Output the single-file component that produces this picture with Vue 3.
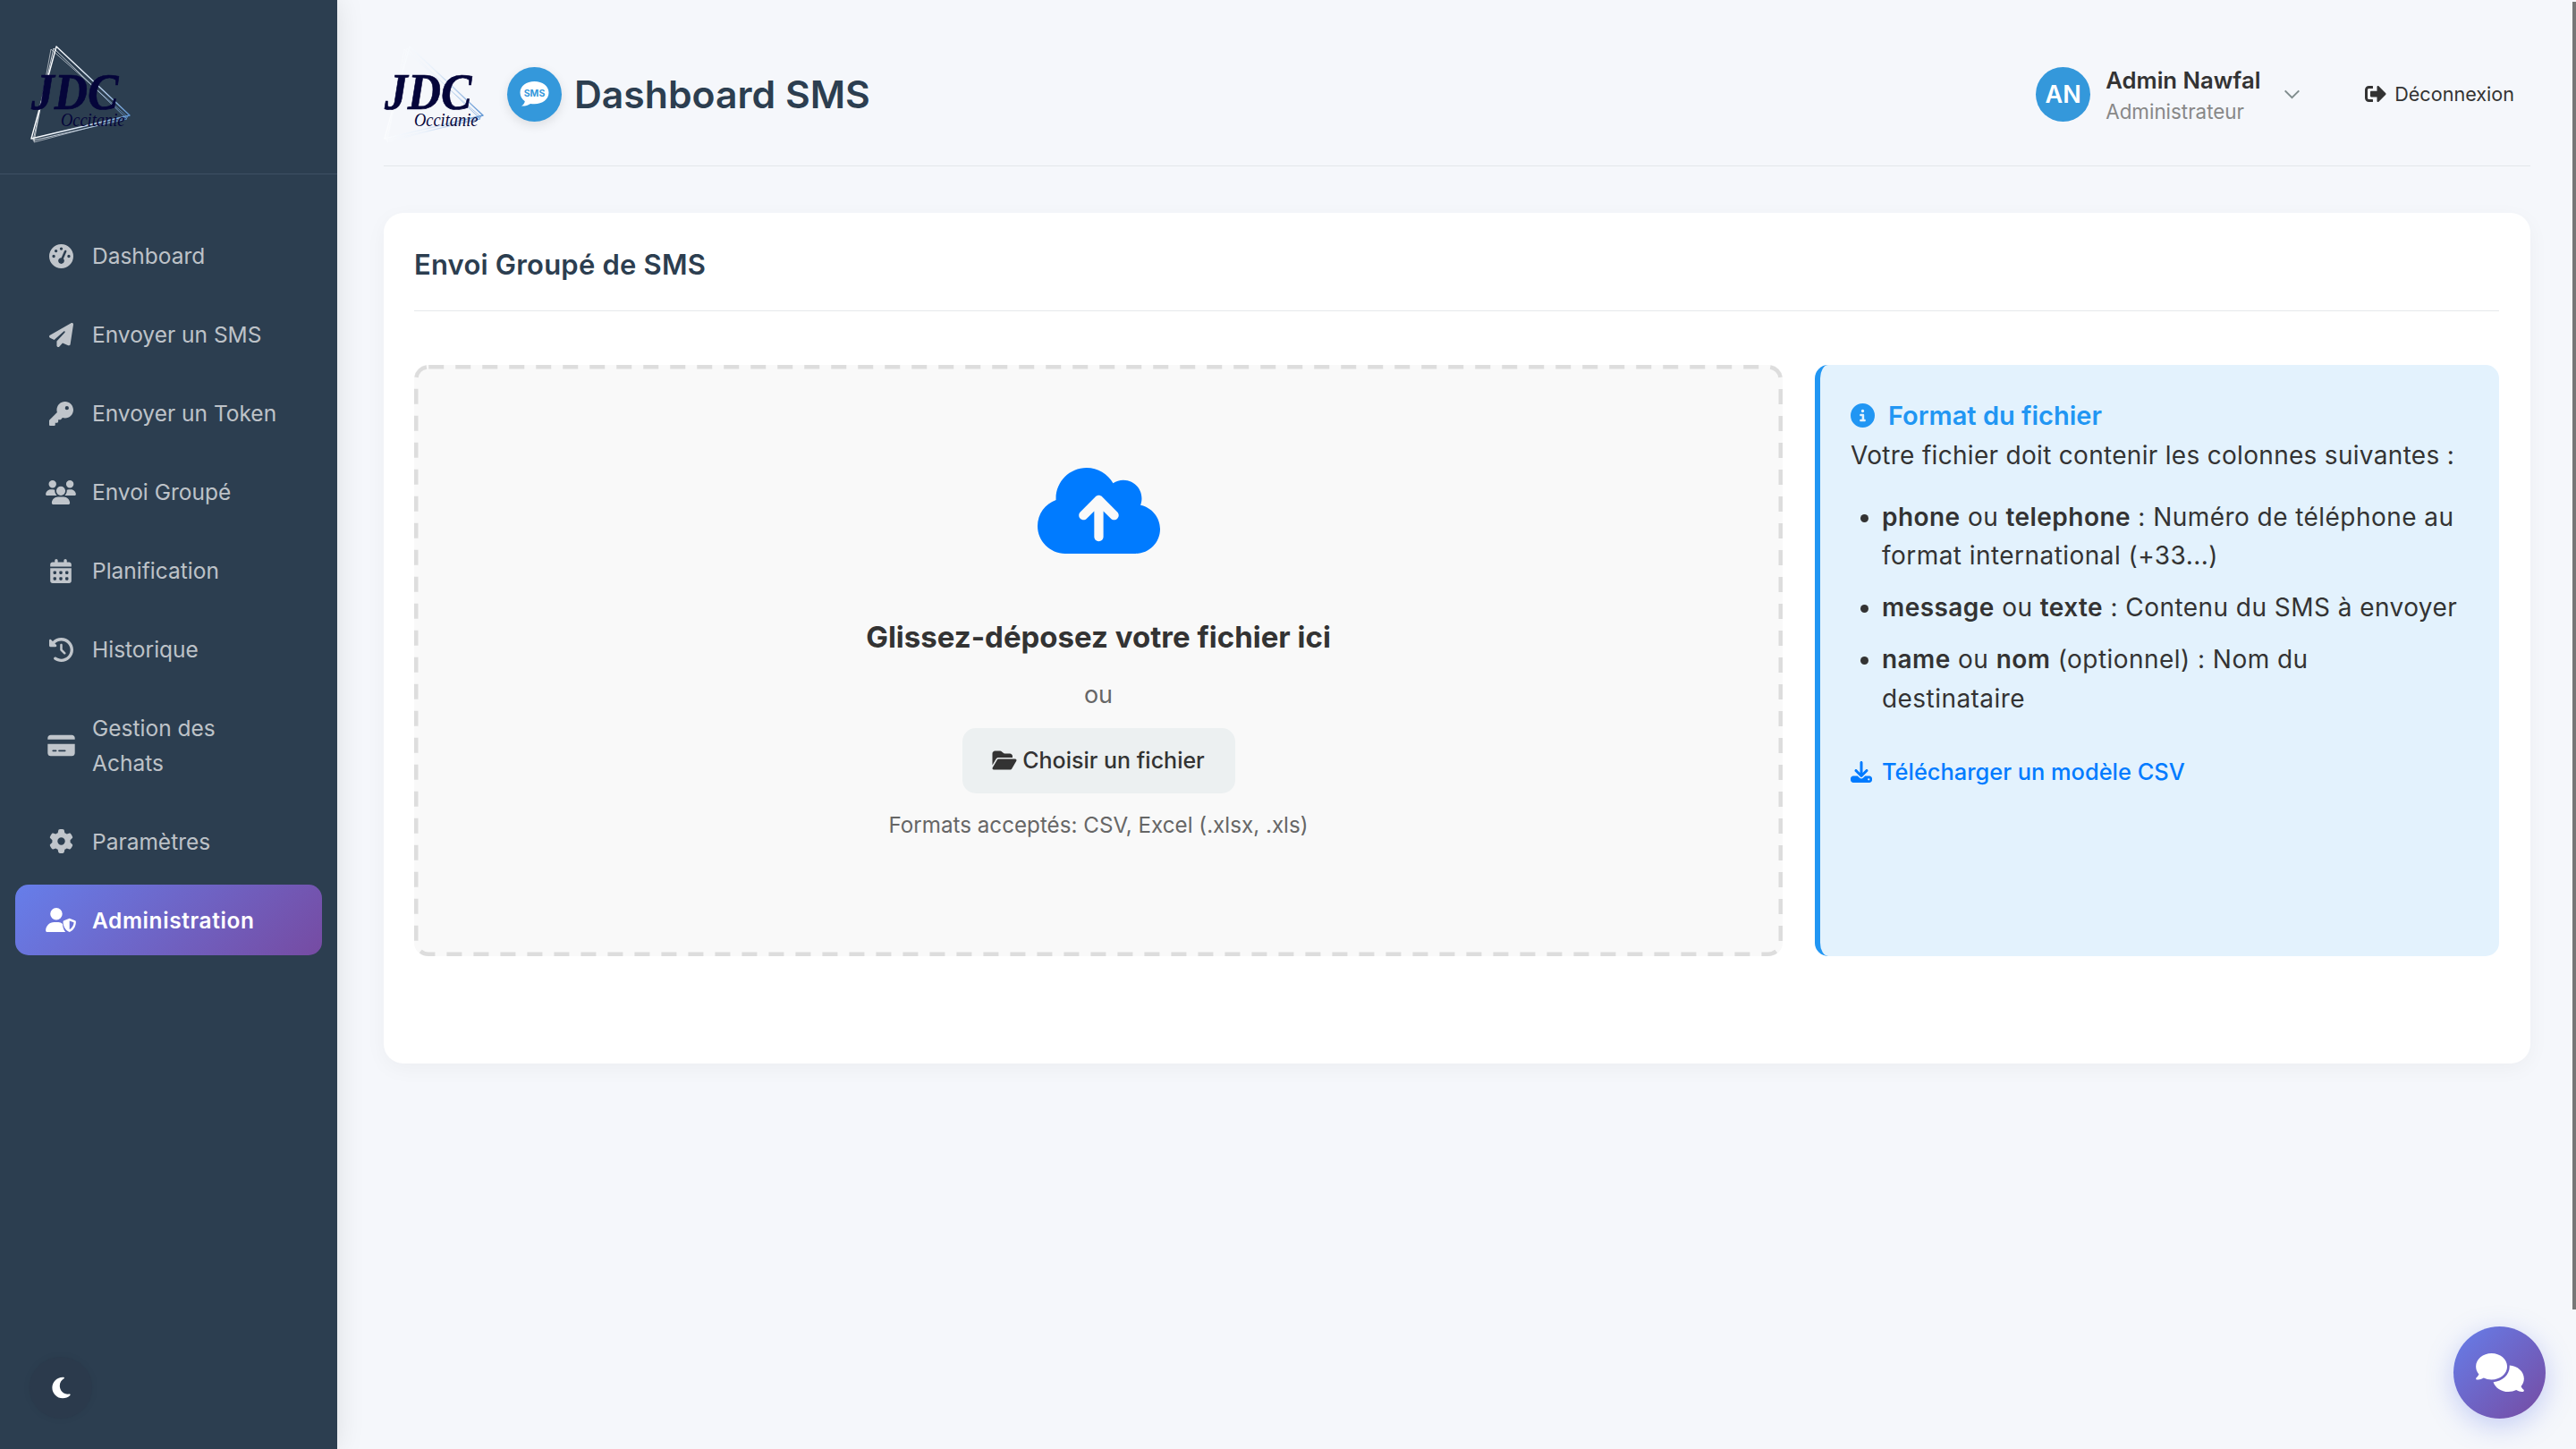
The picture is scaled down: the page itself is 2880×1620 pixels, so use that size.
<template>
  <div class="app">
    <aside class="sidebar">
      <div class="sidebar-logo">
        <svg class="logo" viewBox="0 0 120 120">
          <defs>
            <linearGradient id="jdc-tri" gradientUnits="userSpaceOnUse" x1="5" y1="60" x2="115" y2="80">
              <stop offset="0" stop-color="#ffffff" />
              <stop offset="0.45" stop-color="#e8f0fa" />
              <stop offset="0.75" stop-color="#a9c6e8" />
              <stop offset="1" stop-color="#5f95d3" />
            </linearGradient>
          </defs>
          <g fill="none" stroke="url(#jdc-tri)">
            <path d="M33 7 L115 84 L5 110 Z" stroke-width="1.4" stroke-linejoin="round" />
            <path d="M30 9 L112 88 L7 112 Z" stroke-width="0.8" />
            <path d="M27 10 L113 86 L8 114 Z" stroke-width="0.6" />
          </g>
          <text class="logo-jdc" transform="translate(5 77) scale(0.89 1)">JDC</text>
          <text class="logo-occ" transform="translate(38 96) scale(1.15 1.3)">Occitanie</text>
        </svg>
      </div>
      <nav class="nav">
        <a v-for="item in navItems" :key="item.label" class="nav-item" :class="{ active: item.active }">
          <span class="nav-icon">
            <svg :viewBox="item.box" :style="{ width: item.width + 'px' }"><path :d="item.d" /></svg>
          </span>
          <span class="nav-label">{{ item.label }}</span>
        </a>
      </nav>
      <button class="theme-toggle">
        <svg viewBox="0 0 384 512"><path d="M223.5 32C100 32 0 132.3 0 256S100 480 223.5 480c60.6 0 115.5-24.2 155.8-63.4c5-4.9 6.3-12.5 3.1-18.7s-10.1-9.7-17-8.5c-9.8 1.7-19.8 2.6-30.1 2.6c-96.9 0-175.5-78.8-175.5-176c0-65.8 36-123.1 89.3-153.3c6.1-3.5 9.2-10.5 7.7-17.3s-7.3-11.9-14.3-12.5c-6.3-.5-12.6-.8-19-.8z" /></svg>
      </button>
    </aside>

    <main class="main">
      <header class="topbar">
        <svg class="logo header-logo" viewBox="0 0 120 120">
          <g fill="none" stroke="url(#jdc-tri)">
            <path d="M33 7 L115 84 L5 110 Z" stroke-width="1.4" stroke-linejoin="round" />
            <path d="M30 9 L112 88 L7 112 Z" stroke-width="0.8" />
            <path d="M27 10 L113 86 L8 114 Z" stroke-width="0.6" />
          </g>
          <text class="logo-jdc" transform="translate(5 77) scale(0.89 1)">JDC</text>
          <text class="logo-occ" transform="translate(38 96) scale(1.15 1.3)">Occitanie</text>
        </svg>
        <span class="sms-badge">
          <svg viewBox="0 0 32 28">
            <path d="M16 0C7 0 0 5 0 12.500c0 4 2 7.500 5.300 9.800C5 24.500 3.500 26.500 1.500 27.500c3.500.3 7.500-.8 10-2.600 1.400.2 3 .3 4.500.3 9 0 16-5.200 16-12.700S25 0 16 0z" />
            <text x="16" y="17" text-anchor="middle">SMS</text>
          </svg>
        </span>
        <h1 class="page-title">Dashboard SMS</h1>
        <div class="user-box">
          <span class="avatar">AN</span>
          <div class="user-text">
            <div class="user-name">Admin Nawfal</div>
            <div class="user-role">Administrateur</div>
          </div>
          <svg class="chevron" viewBox="0 0 20 12"><path d="M1.500 1.500 L10 10 L18.500 1.500" /></svg>
          <a class="logout">
            <svg viewBox="0 0 512 512"><path d="M497 273L329 441c-15 15-41 4.500-41-17v-96H152c-13.300 0-24-10.700-24-24v-96c0-13.300 10.700-24 24-24h136V88c0-21.400 25.900-32 41-17l168 168c9.300 9.400 9.300 24.600 0 34zM192 436v-40c0-6.600-5.400-12-12-12H96c-17.700 0-32-14.300-32-32V160c0-17.700 14.300-32 32-32h84c6.600 0 12-5.400 12-12V76c0-6.600-5.400-12-12-12H96c-53 0-96 43-96 96v192c0 53 43 96 96 96h84c6.600 0 12-5.400 12-12z" /></svg>
            Déconnexion
          </a>
        </div>
      </header>

      <section class="card">
        <h2 class="card-title">Envoi Groupé de SMS</h2>
        <div class="upload-grid">
          <div class="dropzone">
            <svg class="dash-frame"><rect class="dash-rect" x="2.250" y="2.250" rx="14" ry="14" /></svg>
            <svg class="cloud" viewBox="0 32 640 448"><path d="M144 480C64.500 480 0 415.500 0 336c0-62.800 40.200-116.200 96.200-135.900c-.1-2.700-.2-5.400-.2-8.100c0-88.400 71.600-160 160-160c59.300 0 111 32.200 138.700 80.200C409.900 102 428.300 96 448 96c53 0 96 43 96 96c0 12.200-2.300 23.800-6.400 34.600C596 238.400 640 290.100 640 352c0 70.700-57.300 128-128 128H144zm79-217c-9.400 9.400-9.400 24.600 0 33.900s24.600 9.400 33.900 0l39-39V392c0 13.300 10.700 24 24 24s24-10.700 24-24V257.900l39 39c9.400 9.400 24.600 9.400 33.900 0s9.400-24.600 0-33.900l-80-80c-9.400-9.400-24.600-9.400-33.900 0l-80 80z" /></svg>
            <h3 class="drop-title">Glissez-déposez votre fichier ici</h3>
            <p class="drop-or">ou</p>
            <button class="btn-file">
              <svg viewBox="0 0 576 512"><path d="M88.700 223.800L0 375.800V96C0 60.700 28.700 32 64 32H181.500c17 0 33.300 6.700 45.300 18.700l26.500 26.500c12 12 28.300 18.700 45.300 18.700H416c35.300 0 64 28.700 64 64v32H144c-22.800 0-43.800 12.100-55.300 31.800zm27.600 16.100C122.100 230 132.600 224 144 224H544c11.500 0 22 6.100 27.700 16.100s5.700 22.200-.1 32.100l-112 192C453.900 474 443.400 480 432 480H32c-11.500 0-22-6.100-27.700-16.100s-5.700-22.200 .1-32.100l112-192z" /></svg>
              Choisir un fichier
            </button>
            <p class="drop-hint">Formats acceptés: CSV, Excel (.xlsx, .xls)</p>
          </div>

          <div class="format-info">
            <h4 class="format-title">
              <svg viewBox="0 0 512 512"><path d="M256 512A256 256 0 1 0 256 0a256 256 0 1 0 0 512zM216 336h24V272H216c-13.300 0-24-10.700-24-24s10.700-24 24-24h48c13.300 0 24 10.700 24 24v88h8c13.300 0 24 10.700 24 24s-10.700 24-24 24H216c-13.300 0-24-10.700-24-24s10.700-24 24-24zm40-208a32 32 0 1 1 0 64 32 32 0 1 1 0-64z" /></svg>
              Format du fichier
            </h4>
            <p class="format-intro">Votre fichier doit contenir les colonnes suivantes :</p>
            <ul class="format-list">
              <li><strong>phone</strong> ou <strong>telephone</strong> : Numéro de téléphone au<br />format international (+33...)</li>
              <li><strong>message</strong> ou <strong>texte</strong> : Contenu du SMS à envoyer</li>
              <li><strong>name</strong> ou <strong>nom</strong> (optionnel) : Nom du<br />destinataire</li>
            </ul>
            <a class="template-link">
              <svg viewBox="0 0 512 512"><path d="M288 32c0-17.700-14.300-32-32-32s-32 14.300-32 32V274.700l-73.400-73.400c-12.500-12.500-32.800-12.500-45.300 0s-12.500 32.800 0 45.300l128 128c12.500 12.500 32.800 12.500 45.300 0l128-128c12.500-12.500 12.500-32.800 0-45.300s-32.800-12.500-45.300 0L288 274.700V32zM64 352c-35.300 0-64 28.700-64 64v32c0 35.300 28.700 64 64 64H448c35.300 0 64-28.700 64-64V416c0-35.300-28.700-64-64-64H346.500l-45.300 45.300c-25 25-65.500 25-90.500 0L165.500 352H64zm368 56a24 24 0 1 1 0 48 24 24 0 1 1 0-48z" /></svg>
              Télécharger un modèle CSV
            </a>
          </div>
        </div>
      </section>
    </main>

    <button class="chat-fab">
      <svg viewBox="0 0 640 512"><path d="M208 352c114.900 0 208-78.800 208-176S322.900 0 208 0S0 78.800 0 176c0 38.600 14.700 74.300 39.600 103.400c-3.500 9.400-8.700 17.700-14.200 24.700c-4.800 6.200-9.700 11-13.300 14.300c-1.800 1.600-3.300 2.900-4.300 3.700c-.5 .4-.9 .7-1.100 .8l-.2 .2 0 0 0 0C1 327.200-1.400 334.400 .8 340.900S9.100 352 16 352c21.800 0 43.800-5.600 62.100-12.500c9.200-3.500 17.800-7.400 25.300-11.400C134.100 343.300 169.800 352 208 352zM448 176c0 112.300-99.100 196.900-216.500 207C255.800 457.400 336.400 512 432 512c38.200 0 73.900-8.700 104.700-23.900c7.500 4 16 7.900 25.200 11.400c18.300 6.900 40.300 12.500 62.100 12.500c6.900 0 13.100-4.500 15.200-11.100c2.100-6.600-.2-13.800-5.800-17.900l0 0 0 0-.2-.2c-.2-.2-.6-.4-1.100-.8c-1-.8-2.500-2-4.300-3.700c-3.600-3.300-8.500-8.100-13.300-14.300c-5.500-7-10.700-15.400-14.200-24.700c24.900-29 39.600-64.700 39.600-103.400c0-92.800-84.900-168.900-192.600-175.500c.4 5.100 .6 10.300 .6 15.500z" /></svg>
    </button>
    <div class="scroll-thumb"></div>
  </div>
</template>

<script setup>
const navItems = [
  { label: 'Dashboard', box: '0 0 512 512', width: 27, d: 'M0 256a256 256 0 1 1 512 0A256 256 0 1 1 0 256zM288 96a32 32 0 1 0 -64 0 32 32 0 1 0 64 0zM256 416c35.300 0 64-28.700 64-64c0-17.400-6.900-33.100-18.100-44.600L366 161.700c5.300-12.100-.2-26.300-12.300-31.600s-26.300 .2-31.600 12.300L257.900 288c-.6 0-1.300 0-1.900 0c-35.300 0-64 28.700-64 64s28.700 64 64 64zM176 144a32 32 0 1 0 -64 0 32 32 0 1 0 64 0zM96 288a32 32 0 1 0 0-64 32 32 0 1 0 0 64zm352-32a32 32 0 1 0 -64 0 32 32 0 1 0 64 0z' },
  { label: 'Envoyer un SMS', box: '0 0 512 512', width: 27, d: 'M498.100 5.600c10.100 7 15.400 19.100 13.500 31.200l-64 416c-1.500 9.700-7.400 18.200-16 23s-18.900 5.400-28 1.600L284 427.700l-68.500 74.100c-8.900 9.700-22.900 12.900-35.200 8.100S160 493.200 160 480V396.400c0-4 1.500-7.800 4.200-10.700L331.800 202.800c5.800-6.300 5.600-16-.4-22s-15.700-6.400-22-.7L106 360.800 17.700 316.600C7.100 311.300 .3 300.700 0 288.900s5.900-22.800 16.100-28.700l448-256c10.700-6.100 23.900-5.500 34 1.400z' },
  { label: 'Envoyer un Token', box: '0 0 512 512', width: 27, d: 'M336 352c97.200 0 176-78.800 176-176S433.200 0 336 0S160 78.800 160 176c0 18.700 2.900 36.800 8.300 53.700L7 391c-4.500 4.500-7 10.600-7 17v80c0 13.300 10.700 24 24 24h80c13.300 0 24-10.700 24-24V448h40c13.300 0 24-10.700 24-24V384h40c6.400 0 12.500-2.500 17-7l33.300-33.300c16.900 5.400 35 8.300 53.700 8.300zM376 96a40 40 0 1 1 0 80 40 40 0 1 1 0-80z' },
  { label: 'Envoi Groupé', box: '0 0 640 512', width: 34, d: 'M144 0a80 80 0 1 1 0 160A80 80 0 1 1 144 0zM512 0a80 80 0 1 1 0 160A80 80 0 1 1 512 0zM0 298.700C0 239.800 47.800 192 106.700 192h42.700c15.900 0 31 3.500 44.600 9.700c-1.300 7.200-1.900 14.700-1.900 22.300c0 38.200 16.800 72.500 43.300 96c-.2 0-.4 0-.7 0H21.300C9.600 320 0 310.400 0 298.700zM405.300 320c-.2 0-.4 0-.7 0c26.600-23.500 43.300-57.800 43.300-96c0-7.600-.7-15-1.900-22.300c13.600-6.300 28.700-9.700 44.600-9.700h42.700C592.200 192 640 239.800 640 298.700c0 11.800-9.600 21.300-21.300 21.300H405.300zM224 224a96 96 0 1 1 192 0 96 96 0 1 1 -192 0zM128 485.300C128 411.700 187.700 352 261.300 352H378.700C452.300 352 512 411.700 512 485.300c0 14.700-11.900 26.700-26.700 26.700H154.700c-14.700 0-26.700-11.900-26.700-26.700z' },
  { label: 'Planification', box: '0 0 448 512', width: 24, d: 'M128 0c17.700 0 32 14.300 32 32V64H288V32c0-17.700 14.300-32 32-32s32 14.300 32 32V64h48c26.500 0 48 21.500 48 48v48H0V112C0 85.500 21.500 64 48 64H96V32c0-17.700 14.300-32 32-32zM0 192H448V464c0 26.500-21.500 48-48 48H48c-26.500 0-48-21.500-48-48V192zm64 80v32c0 8.800 7.200 16 16 16h32c8.800 0 16-7.200 16-16V272c0-8.800-7.200-16-16-16H80c-8.800 0-16 7.200-16 16zm128 0v32c0 8.800 7.200 16 16 16h32c8.800 0 16-7.200 16-16V272c0-8.800-7.200-16-16-16H208c-8.800 0-16 7.200-16 16zm144-16c-8.800 0-16 7.200-16 16v32c0 8.800 7.200 16 16 16h32c8.800 0 16-7.200 16-16V272c0-8.800-7.200-16-16-16H336zM64 400v32c0 8.800 7.200 16 16 16h32c8.800 0 16-7.200 16-16V400c0-8.800-7.200-16-16-16H80c-8.800 0-16 7.200-16 16zm144-16c-8.800 0-16 7.200-16 16v32c0 8.800 7.200 16 16 16h32c8.800 0 16-7.200 16-16V400c0-8.800-7.200-16-16-16H208zm112 16v32c0 8.800 7.200 16 16 16h32c8.800 0 16-7.200 16-16V400c0-8.800-7.200-16-16-16H336c-8.800 0-16 7.200-16 16z' },
  { label: 'Historique', box: '0 0 512 512', width: 27, d: 'M75 75L41 41C25.900 25.900 0 36.600 0 57.900V168c0 13.300 10.700 24 24 24H134.100c21.400 0 32.100-25.900 17-41l-30.800-30.800C155 85.500 203 64 256 64c106 0 192 86 192 192s-86 192-192 192c-40.800 0-78.600-12.700-109.700-34.400c-14.500-10.100-34.400-6.600-44.600 7.900s-6.600 34.400 7.900 44.600C151.200 495 201.700 512 256 512c141.400 0 256-114.600 256-256S397.400 0 256 0C185.300 0 121.300 28.700 75 75zm181 53c-13.300 0-24 10.700-24 24V256c0 6.400 2.500 12.500 7 17l72 72c9.400 9.400 24.600 9.400 33.900 0s9.400-24.600 0-33.900l-65-65V152c0-13.300-10.700-24-24-24z' },
  { label: 'Gestion des\nAchats', box: '0 0 576 512', width: 31, d: 'M64 32C28.700 32 0 60.700 0 96v32H576V96c0-35.300-28.700-64-64-64H64zM576 224H0V416c0 35.300 28.700 64 64 64H512c35.300 0 64-28.700 64-64V224zM112 352h64c8.800 0 16 7.200 16 16s-7.200 16-16 16H112c-8.800 0-16-7.200-16-16s7.200-16 16-16zm112 16c0-8.800 7.200-16 16-16H368c8.800 0 16 7.200 16 16s-7.200 16-16 16H240c-8.800 0-16-7.200-16-16z' },
  { label: 'Paramètres', box: '0 0 512 512', width: 27, d: 'M495.900 166.600c3.200 8.700 .5 18.400-6.400 24.600l-43.300 39.400c1.100 8.300 1.700 16.800 1.700 25.400s-.6 17.100-1.700 25.400l43.300 39.400c6.900 6.200 9.600 15.900 6.400 24.600c-4.400 11.900-9.700 23.300-15.800 34.300l-4.700 8.100c-6.600 11-14 21.400-22.100 31.200c-5.900 7.200-15.700 9.600-24.500 6.800l-55.700-17.700c-13.400 10.300-28.200 18.900-44 25.400l-12.500 57.100c-2 9.100-9 16.300-18.200 17.800c-13.800 2.300-28 3.500-42.500 3.500s-28.700-1.200-42.500-3.500c-9.200-1.500-16.200-8.700-18.200-17.800l-12.500-57.100c-15.800-6.500-30.600-15.100-44-25.400L83.100 425.900c-8.800 2.800-18.600 .3-24.500-6.800c-8.100-9.800-15.500-20.200-22.100-31.200l-4.700-8.100c-6.100-11-11.400-22.400-15.800-34.300c-3.200-8.700-.5-18.400 6.400-24.600l43.300-39.400C64.600 273.100 64 264.600 64 256s.6-17.100 1.700-25.400L22.400 191.200c-6.900-6.200-9.600-15.900-6.400-24.600c4.400-11.900 9.700-23.300 15.800-34.300l4.700-8.100c6.600-11 14-21.400 22.100-31.200c5.900-7.200 15.700-9.600 24.500-6.800l55.700 17.700c13.400-10.300 28.200-18.900 44-25.400l12.500-57.100c2-9.100 9-16.300 18.200-17.800C227.300 1.200 241.500 0 256 0s28.700 1.200 42.500 3.500c9.200 1.500 16.200 8.700 18.200 17.800l12.500 57.100c15.800 6.500 30.600 15.100 44 25.400l55.700-17.700c8.800-2.800 18.600-.3 24.500 6.800c8.100 9.800 15.500 20.200 22.100 31.200l4.700 8.100c6.100 11 11.400 22.400 15.800 34.300zM256 336a80 80 0 1 0 0-160 80 80 0 1 0 0 160z' },
  { label: 'Administration', active: true, box: '0 0 640 512', width: 34, d: 'M224 256A128 128 0 1 0 224 0a128 128 0 1 0 0 256zm-45.700 48C79.800 304 0 383.800 0 482.300C0 498.700 13.300 512 29.700 512H420c-34-35-58-90-62-170-24-24-58-38-90-38H178.300zM504 224l120 48c10 4 16 13 16 24 0 80-36 172-124 212-7 3-17 3-24 0-88-40-124-132-124-212 0-11 6-20 16-24l120-48zm0 52v180c64-30 88-96 92-148l-92-32z' },
]
</script>

<style scoped>
.app {
  display: flex;
  height: 1620px;
  overflow: hidden;
  background: #f5f7fb;
  font-family: Inter, "Noto Sans", sans-serif;
  color: #333;
}

.logo-jdc {
  font-family: "Liberation Serif", serif;
  font-weight: 700;
  font-style: italic;
  font-size: 58px;
  fill: #05053a;
  stroke: #05053a;
  stroke-width: 0.7px;
}

.logo-occ {
  font-family: "Liberation Serif", serif;
  font-style: italic;
  font-size: 16px;
  fill: #05053a;
}

.logo {
  display: block;
  width: 120px;
  height: 120px;
  overflow: visible;
}

/* sidebar */
.sidebar {
  flex: 0 0 377px;
  display: flex;
  flex-direction: column;
  background: #2c3e50;
  box-shadow: 0 0 30px rgba(0, 0, 0, 0.1);
  position: relative;
  z-index: 2;
}

.sidebar-logo {
  height: 195px;
  box-sizing: border-box;
  padding: 45px 0 0 30px;
  border-bottom: 1.5px solid #3e5064;
}

.nav {
  padding: 52px 17px 0;
}

.nav-item {
  display: flex;
  align-items: center;
  gap: 18px;
  padding: 20.300px 20px 20.300px 34px;
  margin-bottom: 9px;
  border-radius: 15px;
  color: rgba(255, 255, 255, 0.7);
  font-size: 24.500px;
  line-height: 38.400px;
  font-weight: 400;
}

.nav-item.active {
  background: linear-gradient(135deg, #667eea, #764ba2);
  color: #fff;
  font-weight: 600;
  letter-spacing: 0.600px;
}

.nav-icon {
  flex: 0 0 34px;
  display: flex;
  justify-content: center;
}

.nav-icon svg {
  display: block;
  height: 27px;
  fill: currentColor;
}

.nav-label {
  white-space: pre-line;
}

.theme-toggle {
  margin: auto 0 34px 33px;
  width: 70px;
  height: 69px;
  border: none;
  border-radius: 50%;
  background: #2b3a4c;
  box-shadow: 0 0 8px rgba(0, 0, 0, 0.06);
  display: flex;
  align-items: center;
  justify-content: center;
  padding: 0;
}

.theme-toggle svg {
  width: 21px;
  height: 27px;
  fill: #fff;
}

/* main */
.main {
  flex: 1;
  min-width: 0;
  padding: 0 51px 0 52px;
}

.topbar {
  display: flex;
  align-items: center;
  height: 186px;
  box-sizing: border-box;
  padding-top: 25px;
  border-bottom: 1.5px solid #e3e7ea;
}

.header-logo {
  margin: 0 22px 0 -4px;
}

.sms-badge {
  flex: 0 0 61px;
  height: 61px;
  border-radius: 50%;
  background: #3498db;
  box-shadow: 0 4px 12px rgba(0, 0, 0, 0.1);
  display: flex;
  align-items: center;
  justify-content: center;
}

.sms-badge svg {
  width: 33px;
  height: 28px;
  fill: #fff;
}

.sms-badge text {
  font-size: 10.500px;
  font-weight: 700;
  fill: #3498db;
}

.page-title {
  margin: 0 0 0 14px;
  font-size: 42.700px;
  font-weight: 600;
  color: #2c3e50;
}

.user-box {
  margin-left: auto;
  display: flex;
  align-items: center;
}

.avatar {
  width: 61px;
  height: 61px;
  border-radius: 50%;
  background: #3498db;
  color: #fff;
  font-size: 27px;
  font-weight: 600;
  display: flex;
  align-items: center;
  justify-content: center;
}

.user-text {
  margin-left: 17px;
  width: 199px;
  padding-top: 2px;
}

.user-name {
  font-size: 25.700px;
  line-height: 36px;
  font-weight: 600;
  color: #333;
}

.user-role {
  font-size: 22.400px;
  line-height: 32px;
  color: #888;
  margin-top: 1px;
}

.chevron {
  width: 19px;
  height: 11px;
  fill: none;
  stroke: #7f8c8d;
  stroke-width: 2.200px;
}

.logout {
  margin: 0 18px 0 72px;
  display: flex;
  align-items: center;
  gap: 9px;
  font-size: 21.600px;
  color: #333;
}

.logout svg {
  width: 24px;
  height: 24px;
  fill: #333;
}

.card {
  margin-top: 51.500px;
  height: 951px;
  box-sizing: border-box;
  padding: 34px 35px 0 34px;
  background: #fff;
  border-radius: 22px;
  box-shadow: 0 6px 24px rgba(0, 0, 0, 0.04);
}

.card-title {
  margin: 0;
  padding-bottom: 27px;
  border-bottom: 1.5px solid #e6e9eb;
  font-size: 31px;
  letter-spacing: 0.200px;
  line-height: 48px;
  font-weight: 600;
  color: #2c3e50;
}

.upload-grid {
  display: grid;
  grid-template-columns: 2fr 1fr;
  gap: 36px;
  margin-top: 60px;
}

.dropzone {
  position: relative;
  display: flex;
  flex-direction: column;
  align-items: center;
  padding: 115px 0 127px;
  border-radius: 15px;
  background: #f9f9f9;
}

.dash-frame {
  position: absolute;
  inset: 0;
  width: 100%;
  height: 100%;
}

.dash-rect {
  width: calc(100% - 4.500px);
  height: calc(100% - 4.500px);
  fill: none;
  stroke: #ddd;
  stroke-width: 4.500px;
  stroke-dasharray: 17 13;
}

.cloud {
  display: block;
  width: 137px;
  height: 96px;
  fill: #007bff;
}

.drop-title {
  margin: 69px 0 0;
  font-size: 33px;
  line-height: 48px;
  font-weight: 700;
  color: #333;
}

.drop-or {
  margin: 22px 0 0;
  font-size: 27px;
  line-height: 38px;
  color: #666;
}

.btn-file {
  margin-top: 18px;
  width: 305px;
  height: 73px;
  border: none;
  border-radius: 15px;
  background: #ecf0f1;
  color: #333;
  font: inherit;
  font-size: 25px;
  font-weight: 500;
  display: flex;
  align-items: center;
  justify-content: center;
  gap: 6px;
}

.btn-file svg {
  width: 28px;
  height: 24px;
  fill: #333;
}

.drop-hint {
  margin: 17px 0 0;
  font-size: 24.200px;
  line-height: 38px;
  color: #666;
}

.format-info {
  padding: 37px 20px 0 34px;
  border-left: 6px solid #2196f3;
  border-radius: 15px;
  background: #e3f2fd;
}

.format-title {
  margin: 0;
  display: flex;
  align-items: center;
  gap: 15px;
  font-size: 29px;
  line-height: 40px;
  font-weight: 600;
  color: #2196f3;
}

.format-title svg {
  width: 27px;
  height: 27px;
  fill: #2196f3;
}

.format-intro {
  margin: 3px 0 0;
  font-size: 28px;
  letter-spacing: 0.300px;
  line-height: 43.200px;
  color: #333;
}

.format-list {
  margin: 26px 0 0;
  padding: 0 0 0 35px;
  list-style: none;
}

.format-list li {
  position: relative;
  margin-bottom: 15px;
  font-size: 28px;
  letter-spacing: 0.450px;
  line-height: 43.200px;
  color: #333;
}

.format-list li::before {
  content: "";
  position: absolute;
  left: -24px;
  top: 18px;
  width: 9px;
  height: 9px;
  border-radius: 50%;
  background: #333;
}

.format-list strong {
  font-weight: 600;
}

.template-link {
  margin-top: 40px;
  display: flex;
  align-items: center;
  gap: 11px;
  font-size: 25.400px;
  line-height: 40px;
  font-weight: 500;
  color: #007bff;
}

.template-link svg {
  width: 24px;
  height: 24px;
  fill: #007bff;
}

.chat-fab {
  position: fixed;
  right: 34px;
  bottom: 34px;
  width: 103px;
  height: 103px;
  padding: 0;
  border: none;
  border-radius: 50%;
  background: linear-gradient(135deg, #667eea, #764ba2);
  box-shadow: 0 8px 30px rgba(102, 126, 234, 0.35);
  display: flex;
  align-items: center;
  justify-content: center;
  z-index: 5;
}

.chat-fab svg {
  width: 54px;
  height: 43px;
  fill: #fff;
}

.scroll-thumb {
  position: fixed;
  top: 2px;
  right: 0;
  width: 4px;
  height: 1462px;
  background: #777;
}
</style>

<style>
html,
body {
  margin: 0;
  background: #f5f7fb;
}
</style>
